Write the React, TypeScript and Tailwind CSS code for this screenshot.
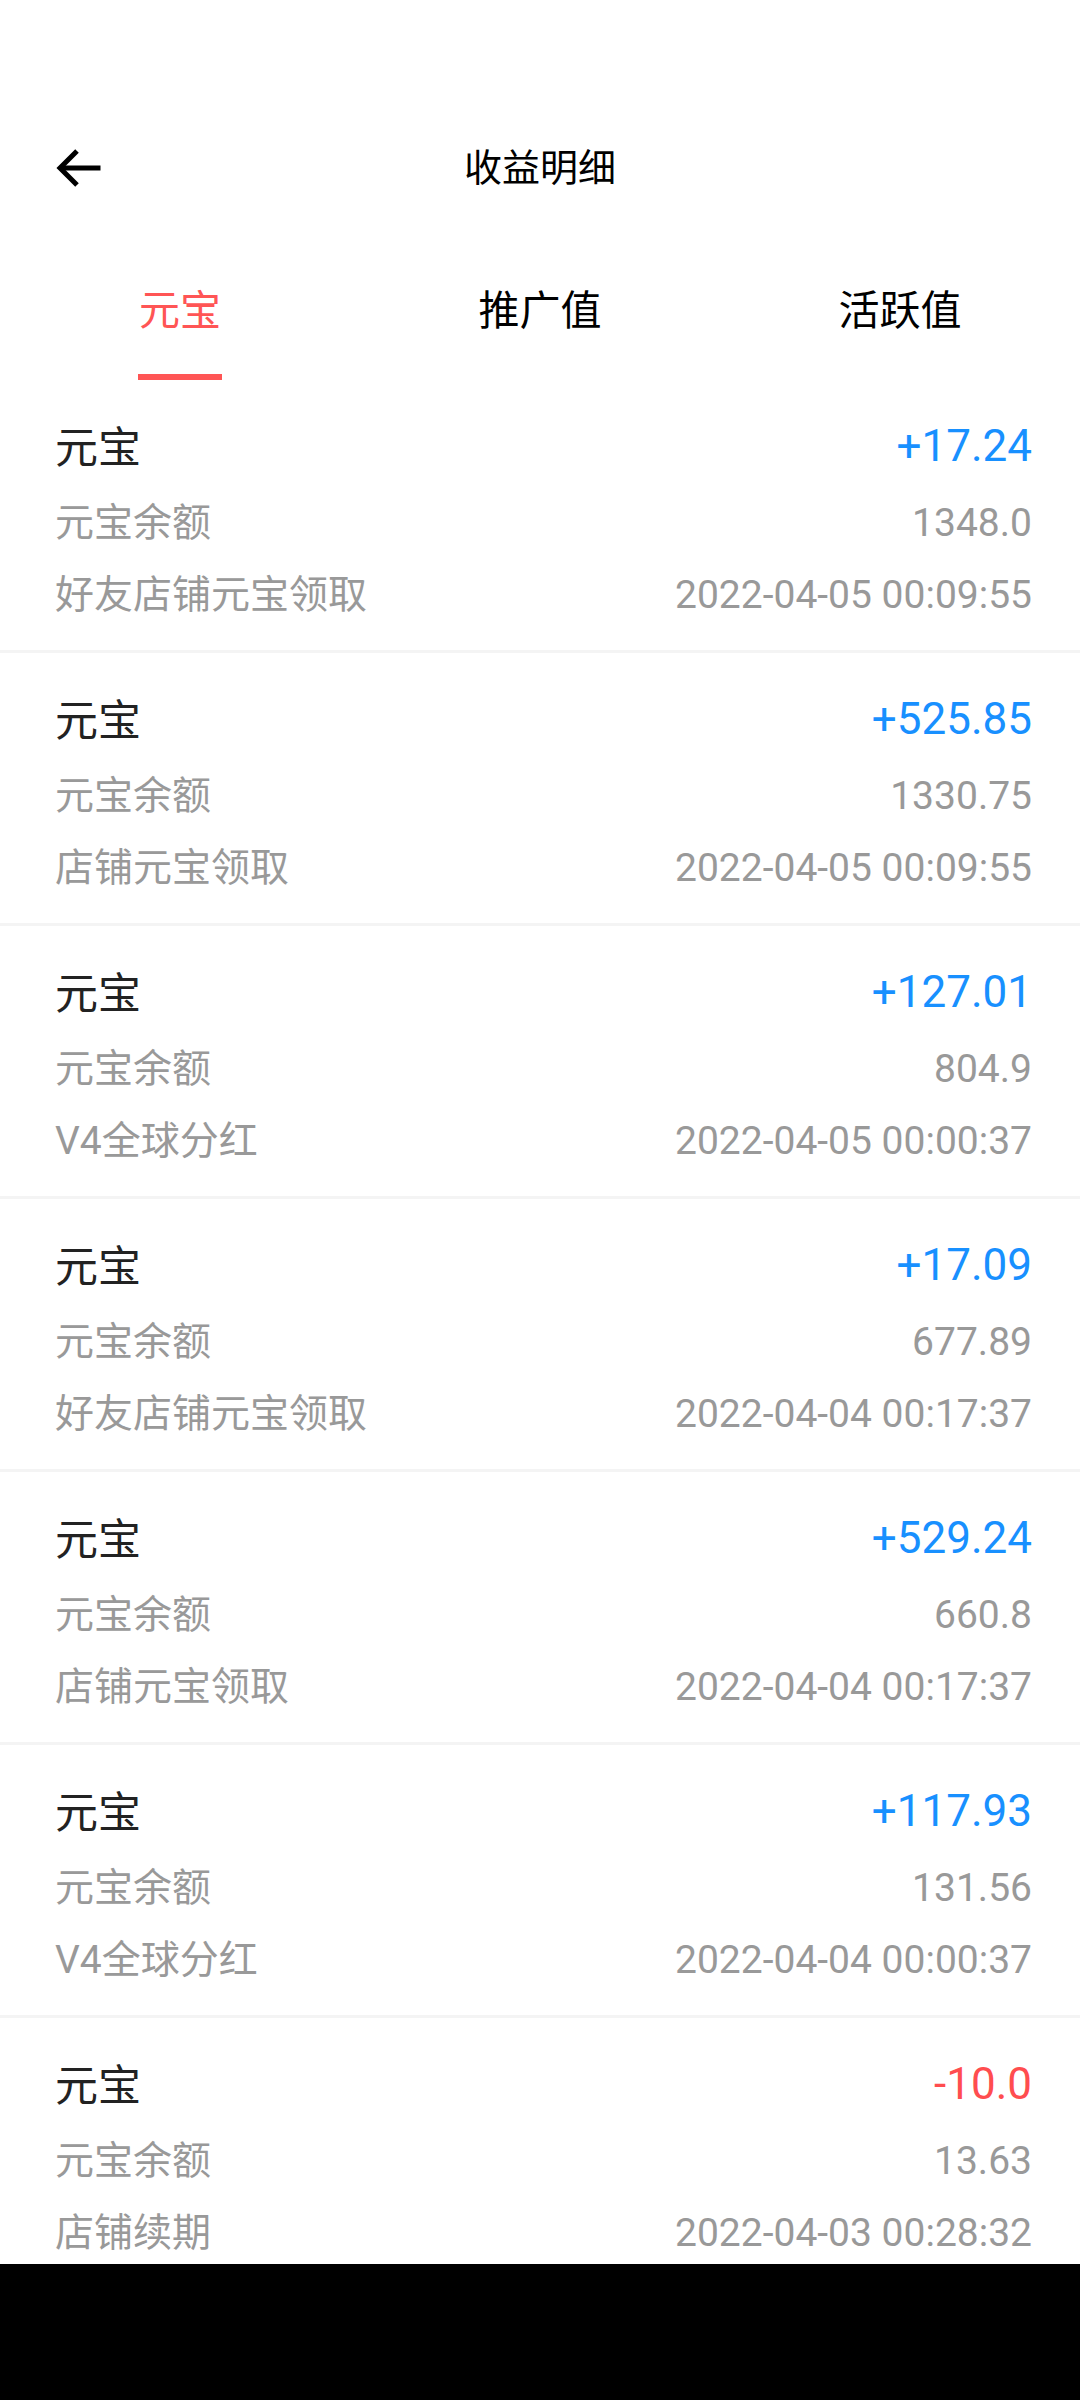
import React, { useState } from 'react';

const records = [
    { amount: '+17.24', balance: '1348.0', source: '好友店铺元宝领取', time: '2022-04-05 00:09:55' },
    { amount: '+525.85', balance: '1330.75', source: '店铺元宝领取', time: '2022-04-05 00:09:55' },
    { amount: '+127.01', balance: '804.9', source: 'V4全球分红', time: '2022-04-05 00:00:37' },
    { amount: '+17.09', balance: '677.89', source: '好友店铺元宝领取', time: '2022-04-04 00:17:37' },
    { amount: '+529.24', balance: '660.8', source: '店铺元宝领取', time: '2022-04-04 00:17:37' },
    { amount: '+117.93', balance: '131.56', source: 'V4全球分红', time: '2022-04-04 00:00:37' },
    { amount: '-10.0', balance: '13.63', source: '店铺续期', time: '2022-04-03 00:28:32' },
];

const tabs = ['元宝', '推广值', '活跃值'];

const App = () => {
    const [activeTab, setActiveTab] = useState(0);

    return (
        <div className="w-[1080px] h-[2400px] bg-white flex flex-col overflow-hidden font-['Roboto','Noto_Sans_CJK_SC',sans-serif]">
            {/* status bar */}
            <div className="h-[100px] shrink-0" />

            {/* header */}
            <div className="h-[136px] shrink-0 relative flex items-center justify-center">
                <button className="absolute left-[52px] top-1/2 -translate-y-1/2 w-[52px] h-[52px] flex items-center justify-center">
                    <svg width="46" height="46" viewBox="0 0 46 46" fill="none" stroke="#000" strokeWidth="5" strokeLinecap="square">
                        <path d="M43 23H8" />
                        <path d="M22 6L5 23l17 17" strokeLinecap="butt" strokeLinejoin="miter" />
                    </svg>
                </button>
                <h1 className="text-[38px] leading-none text-black">收益明细</h1>
            </div>

            {/* tabs */}
            <div className="h-[144px] shrink-0 grid grid-cols-3">
                {tabs.map((t, i) => (
                    <button key={t} onClick={() => setActiveTab(i)} className="flex flex-col items-center pt-[47px]">
                        <span className={`text-[41px] leading-[56px] ${activeTab === i ? 'text-[#ff5555]' : 'text-black'}`}>{t}</span>
                        <span className={`mt-[35px] h-[6px] w-[84px] ${activeTab === i ? 'bg-[#ff5555]' : 'bg-transparent'}`} />
                    </button>
                ))}
            </div>

            {/* list */}
            <div className="flex-1 overflow-hidden">
                {records.map((r, i) => (
                    <div key={i} className="h-[273px] border-b-[3px] border-[#f4f4f4] pl-[55px] pr-[48px] pt-[40px]">
                        <div className="flex justify-between items-center h-[56px]">
                            <span className="text-[43px] text-[#222]">元宝</span>
                            <span className={`text-[44px] -translate-y-[2px] ${r.amount.startsWith('-') ? 'text-[#ff4d4f]' : 'text-[#1890ff]'}`}>{r.amount}</span>
                        </div>
                        <div className="flex justify-between items-center h-[50px] mt-[22px] text-[39px] text-[#999]">
                            <span>元宝余额</span>
                            <span>{r.balance}</span>
                        </div>
                        <div className="flex justify-between items-center h-[50px] mt-[22px] text-[39px] text-[#999]">
                            <span>{r.source}</span>
                            <span>{r.time}</span>
                        </div>
                    </div>
                ))}
            </div>

            {/* nav bar */}
            <div className="h-[136px] shrink-0 bg-black" />
        </div>
    );
};

export default App;
